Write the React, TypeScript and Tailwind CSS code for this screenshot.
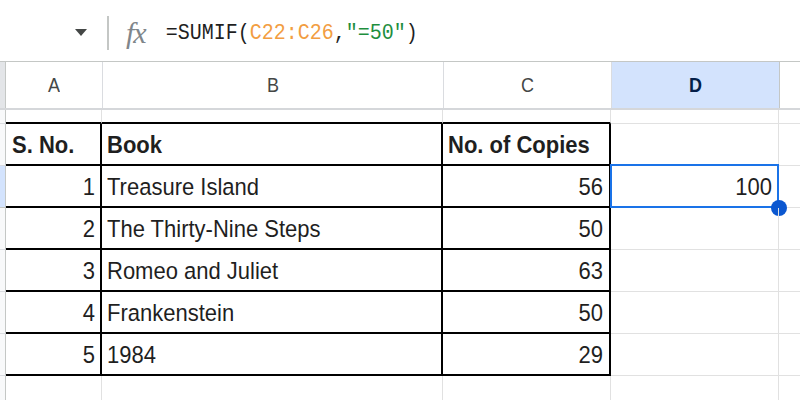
import { Fragment } from 'react';

type Row = { no: string; book: string; copies: string; d?: string };

const rows: Row[] = [
  { no: '1', book: 'Treasure Island', copies: '56', d: '100' },
  { no: '2', book: 'The Thirty-Nine Steps', copies: '50' },
  { no: '3', book: 'Romeo and Juliet', copies: '63' },
  { no: '4', book: 'Frankenstein', copies: '50' },
  { no: '5', book: '1984', copies: '29' },
];

const cellFont = { fontFamily: '"Liberation Sans", Arial, sans-serif' };

function T({ children }: { children: React.ReactNode }) {
  return <span className="inline-block scale-y-[1.12] whitespace-nowrap">{children}</span>;
}

function FormulaBar() {
  return (
    <div className="h-[62px] flex items-center pt-[5px] border-b border-[#c4c7c5] bg-white">
      <div className="w-[75px]" />
      <svg width="12" height="7" viewBox="0 0 12 7" className="mt-[-2px]">
        <path d="M0 0 L12 0 L6 7 Z" fill="#444746" />
      </svg>
      <div className="ml-[20px] w-[2px] h-[34px] bg-[#c4c7c5]" />
      <span
        className="ml-[17px] text-[30px] italic text-[#80868b] leading-none tracking-[-1px]"
        style={{ fontFamily: '"Liberation Serif", "Times New Roman", serif' }}
      >
        fx
      </span>
      <span
        className="ml-[20px] text-[20px] text-[#1f1f1f] leading-none inline-block scale-y-[1.12]"
        style={{ fontFamily: '"Liberation Mono", "DejaVu Sans Mono", monospace' }}
      >
        =SUMIF(<span className="text-[#f29d42]">C22:C26</span>,<span className="text-[#1e8e3e]">"=50"</span>)
      </span>
    </div>
  );
}

function ColumnHeader() {
  const cols = [
    { label: 'A', w: 'w-[97px]' },
    { label: 'B', w: 'w-[341px]' },
    { label: 'C', w: 'w-[168px]' },
  ];
  return (
    <div className="flex h-[48px] border-b-2 border-[#d5d7da]" style={cellFont}>
      <div className="w-[6px] bg-[#e3e5e8] border-r border-[#c4c7c5]" />
      {cols.map((c) => (
        <div
          key={c.label}
          className={`${c.w} border-r border-[#dadce0] flex items-center justify-center text-[18px] text-[#444746]`}
        >
          <T>{c.label}</T>
        </div>
      ))}
      <div className="w-[168px] bg-[#d3e3fd] border-r border-[#c4c7c5] flex items-center justify-center text-[18px] font-bold text-[#041e49]">
        <T>D</T>
      </div>
      <div className="flex-1" />
    </div>
  );
}

function SheetRow({
  height,
  highlight,
  black,
  children,
}: {
  height: string;
  highlight?: boolean;
  black: boolean;
  children?: React.ReactNode;
}) {
  return (
    <div className={`flex ${height}`}>
      <div
        className={`w-[6px] border-r border-[#c4c7c5] border-b ${
          highlight ? 'bg-[#d3e3fd] border-b-[#c4c7c5]' : 'bg-[#f8f9fa] border-b-[#dadce0]'
        }`}
      />
      {children ?? (
        <>
          <div className={`w-[96px] border-r border-[#e1e1e1] ${black ? 'border-b-2 border-b-black' : 'border-b border-b-[#e1e1e1]'}`} />
          <div className={`w-[341px] border-r border-[#e1e1e1] ${black ? 'border-b-2 border-b-black' : 'border-b border-b-[#e1e1e1]'}`} />
          <div className={`w-[168px] border-r border-[#e1e1e1] ${black ? 'border-b-2 border-b-black' : 'border-b border-b-[#e1e1e1]'}`} />
          <div className="w-[168px] border-r border-b border-[#e1e1e1]" />
          <div className="flex-1 border-b border-[#e1e1e1]" />
        </>
      )}
    </div>
  );
}

export default function App() {
  return (
    <div className="w-[800px] h-[400px] overflow-hidden bg-white text-[#1f1f1f]">
      <FormulaBar />
      <ColumnHeader />
      <SheetRow height="h-[14px]" black />
      <div style={cellFont}>
        <SheetRow height="h-[42px]" black>
          <div className="w-[96px] border-r-2 border-b-2 border-black flex items-center px-[6px] text-[22px] font-bold">
            <T>S. No.</T>
          </div>
          <div className="w-[341px] border-r-2 border-b-2 border-black flex items-center px-[5px] text-[22px] font-bold">
            <T>Book</T>
          </div>
          <div className="w-[168px] border-r-2 border-b-2 border-black flex items-center px-[5px] text-[22px] font-bold">
            <T>No. of Copies</T>
          </div>
          <div className="w-[168px] border-r border-b border-[#e1e1e1]" />
          <div className="flex-1 border-b border-[#e1e1e1]" />
        </SheetRow>
        {rows.map((r, i) => (
          <Fragment key={r.no}>
            <SheetRow height="h-[42px]" black highlight={i === 0}>
              <div className="w-[96px] border-r-2 border-b-2 border-black flex items-center justify-end px-[5px] text-[22px]">
                <T>{r.no}</T>
              </div>
              <div className="w-[341px] border-r-2 border-b-2 border-black flex items-center px-[5px] text-[22px]">
                <T>{r.book}</T>
              </div>
              <div className="w-[168px] border-r-2 border-b-2 border-black flex items-center justify-end px-[6px] text-[22px]">
                <T>{r.copies}</T>
              </div>
              <div className="relative z-10 w-[168px] border-r border-b border-[#e1e1e1] flex items-center justify-end px-[6px] text-[22px]">
                {r.d && <T>{r.d}</T>}
                {r.d && (
                  <>
                    <div className="absolute left-[-1px] top-[-2px] right-[-1px] bottom-[-1px] border-2 border-[#1a73e8]" />
                    <div className="absolute z-20 right-[-9px] bottom-[-9px] size-[16px] rounded-full bg-[#0b57d0]" />
                  </>
                )}
              </div>
              <div className="flex-1 border-b border-[#e1e1e1]" />
            </SheetRow>
          </Fragment>
        ))}
        <SheetRow height="h-[42px]" black={false} />
      </div>
    </div>
  );
}
